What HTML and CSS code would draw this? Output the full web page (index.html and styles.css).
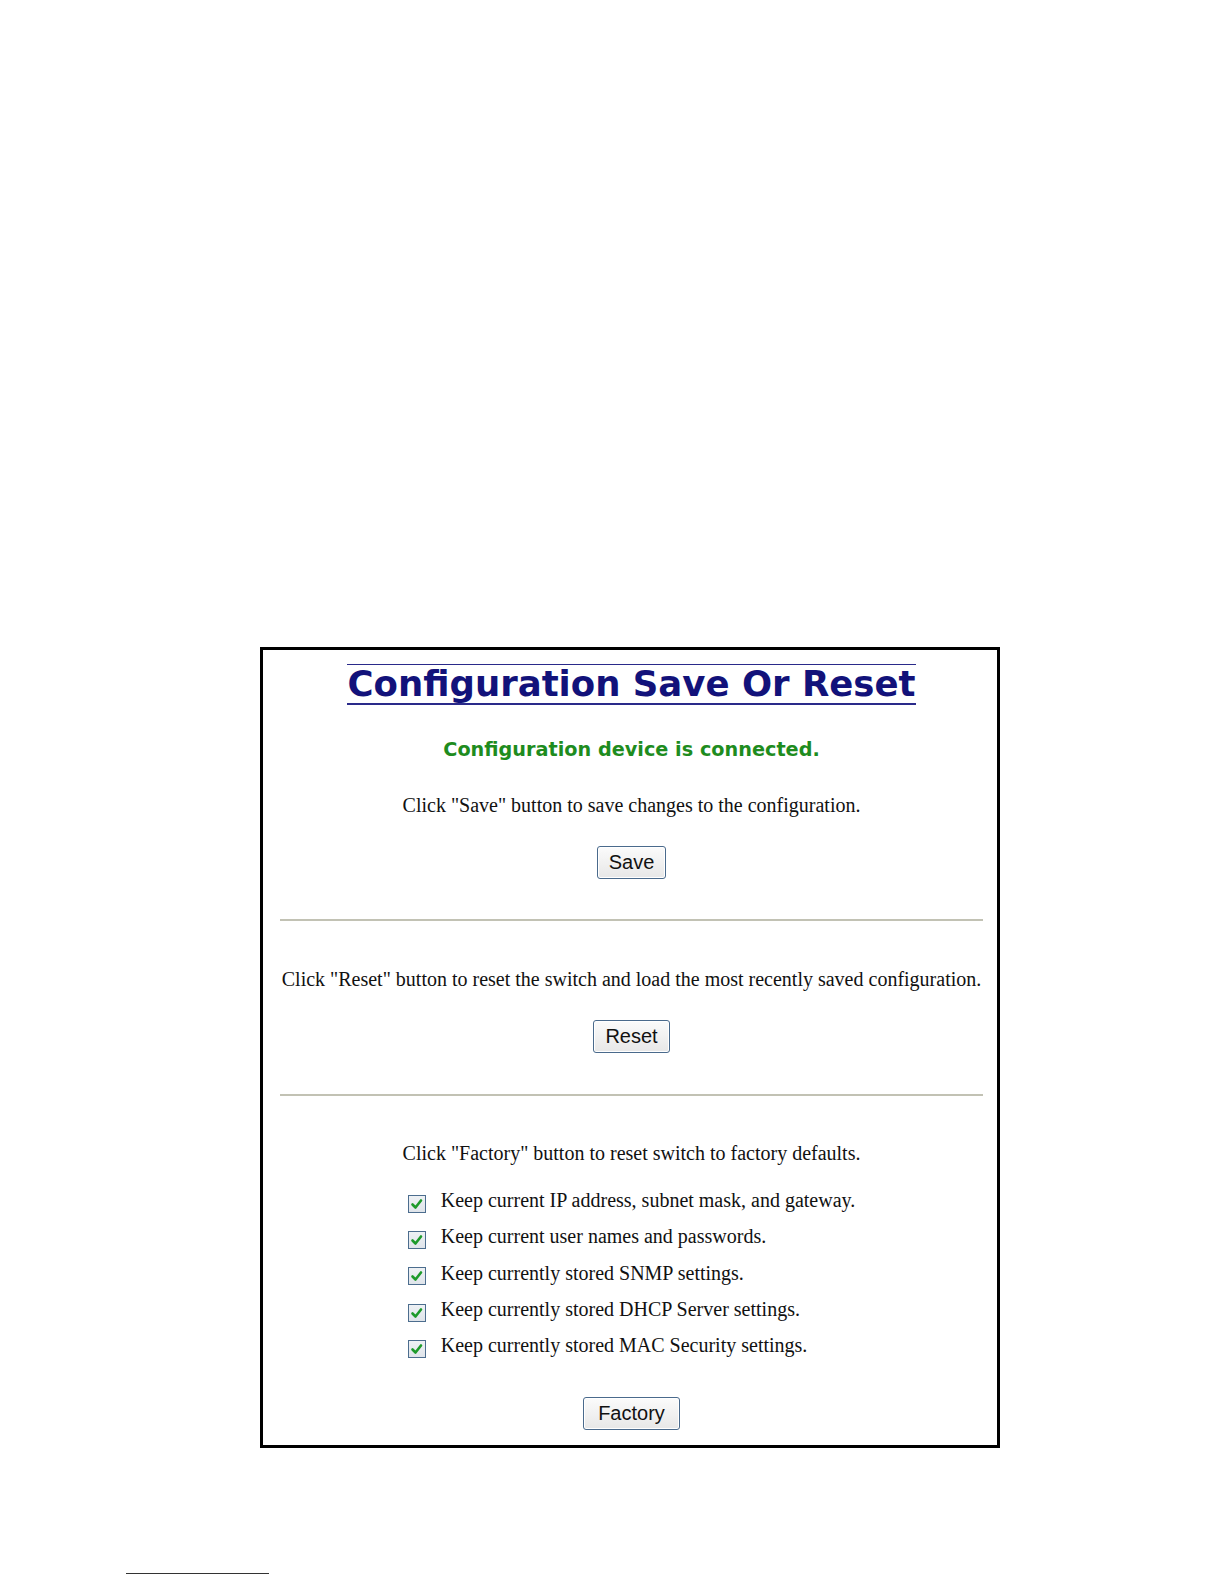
FILE: index.html
```html
<!DOCTYPE html>
<html>
<head>
<meta charset="utf-8">
<link rel="stylesheet" href="styles.css">
</head>
<body>
<div class="page">
  <div class="panel">
    <div class="title-wrap"><h1 class="title">Configuration Save Or Reset</h1></div>
    <p class="status">Configuration device is connected.</p>
    <p class="msg msg-save">Click "Save" button to save changes to the configuration.</p>
    <button class="btn btn-save">Save</button>
    <hr class="rule rule-1">
    <p class="msg msg-reset">Click "Reset" button to reset the switch and load the most recently saved configuration.</p>
    <button class="btn btn-reset">Reset</button>
    <hr class="rule rule-2">
    <p class="msg msg-factory">Click "Factory" button to reset switch to factory defaults.</p>
    <ul class="opts">
      <li class="opt"><span class="cb"><svg viewBox="0 0 18 18" width="18" height="18"><path d="M4.5 9.5 L7.5 12.5 L13 5.5" fill="none" stroke="#1d9a2a" stroke-width="2.6" stroke-linecap="round" stroke-linejoin="round"/></svg></span>Keep current IP address, subnet mask, and gateway.</li>
      <li class="opt"><span class="cb"><svg viewBox="0 0 18 18" width="18" height="18"><path d="M4.5 9.5 L7.5 12.5 L13 5.5" fill="none" stroke="#1d9a2a" stroke-width="2.6" stroke-linecap="round" stroke-linejoin="round"/></svg></span>Keep current user names and passwords.</li>
      <li class="opt"><span class="cb"><svg viewBox="0 0 18 18" width="18" height="18"><path d="M4.5 9.5 L7.5 12.5 L13 5.5" fill="none" stroke="#1d9a2a" stroke-width="2.6" stroke-linecap="round" stroke-linejoin="round"/></svg></span>Keep currently stored SNMP settings.</li>
      <li class="opt"><span class="cb"><svg viewBox="0 0 18 18" width="18" height="18"><path d="M4.5 9.5 L7.5 12.5 L13 5.5" fill="none" stroke="#1d9a2a" stroke-width="2.6" stroke-linecap="round" stroke-linejoin="round"/></svg></span>Keep currently stored DHCP Server settings.</li>
      <li class="opt"><span class="cb"><svg viewBox="0 0 18 18" width="18" height="18"><path d="M4.5 9.5 L7.5 12.5 L13 5.5" fill="none" stroke="#1d9a2a" stroke-width="2.6" stroke-linecap="round" stroke-linejoin="round"/></svg></span>Keep currently stored MAC Security settings.</li>
    </ul>
    <button class="btn btn-factory">Factory</button>
  </div>
  <div class="footnote-rule"></div>
</div>
</body>
</html>
```

FILE: styles.css
```css
html, body {
  margin: 0;
  padding: 0;
  background: #ffffff;
}

.page {
  width: 1224px;
  height: 1584px;
  padding-top: 647px;
  box-sizing: border-box;
}

.panel {
  margin-left: 260px;
  width: 740px;
  height: 801px;
  box-sizing: border-box;
  border: 3px solid #000;
  padding: 0 14px 0 17px;
  display: flex;
  flex-direction: column;
  align-items: center;
}

.title-wrap {
  margin-top: 14px;
  display: flex;
  justify-content: center;
}

.title {
  margin: 0;
  font-family: "DejaVu Sans", Verdana, sans-serif;
  font-weight: bold;
  font-size: 35.5px;
  line-height: 38px;
  color: #12127a;
  border-top: 1px solid #2a2a8a;
  border-bottom: 2px solid #2a2a8a;
  white-space: nowrap;
}

.status {
  margin: 32.5px 0 0;
  font-family: "DejaVu Sans", Verdana, sans-serif;
  font-weight: bold;
  font-size: 19.25px;
  line-height: 24px;
  color: #1e8c1e;
  white-space: nowrap;
}

.msg {
  margin: 0;
  font-family: "Liberation Serif", "Times New Roman", serif;
  font-size: 20px;
  line-height: 24px;
  color: #111;
  white-space: nowrap;
}

.msg-save { margin-top: 31px; }
.msg-reset { margin-top: 46px; }
.msg-factory { margin-top: 45px; }

.btn {
  font-family: "Liberation Sans", Arial, sans-serif;
  font-size: 20px;
  color: #111;
  height: 33px;
  padding: 0 11px;
  border: 1px solid #4a6a8c;
  border-radius: 3px;
  background: linear-gradient(#fbfbfb, #e7e7e7);
  box-shadow: inset 0 0 0 1px #ffffff;
  line-height: 29px;
}

.btn-save { margin-top: 29px; }
.btn-reset { margin-top: 29px; }
.btn-factory { margin-top: 33px; padding: 0 14px; }

.rule {
  align-self: stretch;
  margin: 40px 0 0;
  border: 0;
  height: 2px;
  background: #c2c2b4;
}

.rule-2 { margin-top: 41px; }

.opts {
  list-style: none;
  margin: 18px 0 0;
  padding: 0;
  align-self: center;
}

.opt {
  display: flex;
  align-items: center;
  height: 36.3px;
  font-family: "Liberation Serif", "Times New Roman", serif;
  font-size: 20px;
  color: #111;
  white-space: nowrap;
}

.cb {
  width: 18px;
  height: 18px;
  box-sizing: border-box;
  border: 1px solid #4c6d8e;
  background: linear-gradient(#eef1f4, #dfe4ea);
  margin-right: 15px;
  margin-top: 6px;
  display: flex;
}

.cb svg {
  margin: -1px;
}

.footnote-rule {
  margin: 125px 0 0 126px;
  width: 143px;
  height: 1px;
  background: #333;
}
```
